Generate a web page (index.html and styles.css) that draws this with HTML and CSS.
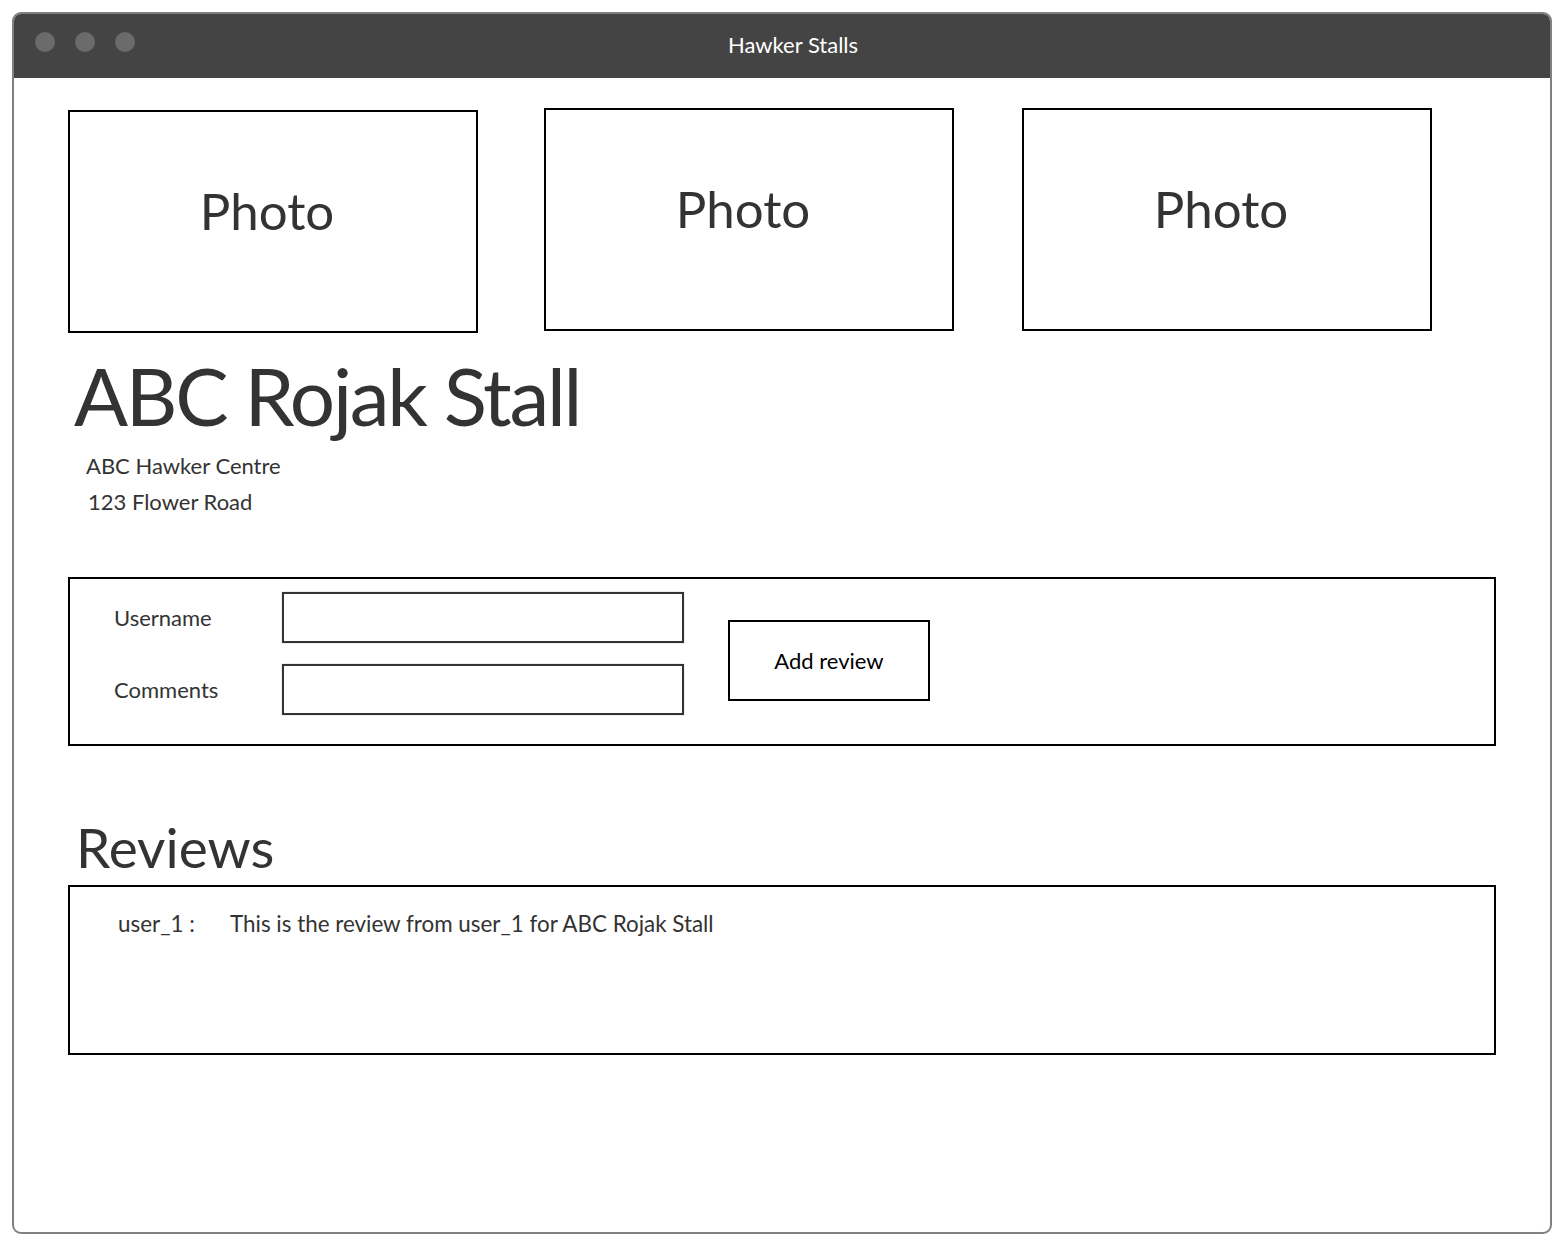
FILE: index.html
```html
<!DOCTYPE html>
<html>
<head>
<meta charset="utf-8">
<title>Hawker Stalls</title>
<link rel="stylesheet" href="styles.css">
</head>
<body>
<div class="window">
  <div class="titlebar">
    <div class="dots"><span class="dot"></span><span class="dot"></span><span class="dot"></span></div>
    <div class="title">Hawker Stalls</div>
  </div>
  <div class="content">
    <div class="photos">
      <div class="photo photo-low">Photo</div>
      <div class="photo">Photo</div>
      <div class="photo">Photo</div>
    </div>
    <h1 class="stall-name">ABC Rojak Stall</h1>
    <div class="address">
      <div class="addr-line">ABC Hawker Centre</div>
      <div class="addr-line addr-line2">123 Flower Road</div>
    </div>
    <div class="form-box">
      <div class="fields">
        <label class="label">Username</label>
        <div class="input"></div>
        <label class="label">Comments</label>
        <div class="input"></div>
      </div>
      <div class="button">Add review</div>
    </div>
    <h2 class="reviews-heading">Reviews</h2>
    <div class="reviews-box">
      <div class="review">
        <span class="review-user">user_1 :</span>
        <span class="review-text">This is the review from user_1 for ABC Rojak Stall</span>
      </div>
    </div>
  </div>
</div>
</body>
</html>
```
FILE: styles.css
```css
html, body {
  margin: 0;
  padding: 0;
  background: #ffffff;
}
body {
  font-family: Lato, "Open Sans", sans-serif;
  color: #333333;
}
.window {
  margin: 12px 0 0 12px;
  width: 1540px;
  height: 1222px;
  box-sizing: border-box;
  border: 2px solid #808080;
  border-radius: 9px;
  overflow: hidden;
  background: #ffffff;
}
.titlebar {
  height: 66px;
  margin: -2px -2px 0 -2px;
  background: #444444;
  position: relative;
  display: flex;
  align-items: center;
  justify-content: center;
}
.dots {
  position: absolute;
  left: 23px;
  top: 20px;
  display: flex;
  gap: 20px;
}
.dot {
  width: 20px;
  height: 20px;
  border-radius: 50%;
  background: #6b6b6b;
}
.title {
  color: #ffffff;
  font-size: 22px;
  margin-left: 22px;
  margin-top: -2px;
}
.content {
  padding: 32px 0 0 54px;
}
.photos {
  display: flex;
  gap: 66px;
  align-items: flex-start;
}
.photo {
  width: 410px;
  height: 223px;
  box-sizing: border-box;
  border: 2px solid #000000;
  display: flex;
  align-items: center;
  justify-content: center;
  padding: 0 12px 22px 0;
  font-size: 51px;
  color: #333333;
}
.photo + .photo {
  margin-top: -2px;
}
.photo + .photo + .photo {
  margin-left: 2px;
}
.stall-name {
  margin: 22px 0 0 6px;
  font-size: 80px;
  font-weight: 400;
  line-height: 80px;
  color: #333333;
  letter-spacing: -2.3px;
}
.address {
  margin: 13px 0 0 18px;
  font-size: 22px;
  line-height: 36px;
}
.addr-line2 {
  margin-left: 2px;
}
.form-box {
  margin-top: 57px;
  width: 1428px;
  height: 169px;
  box-sizing: border-box;
  border: 2px solid #000000;
  display: flex;
  align-items: flex-start;
  padding: 13px 0 0 44px;
}
.fields {
  display: grid;
  grid-template-columns: 168px 402px;
  row-gap: 21px;
  align-items: center;
}
.label {
  font-size: 22px;
  color: #333333;
}
.input {
  height: 51px;
  box-sizing: border-box;
  border: 2px solid #333333;
  box-shadow: 0 0 1px #999999;
}
.button {
  margin: 28px 0 0 44px;
  width: 202px;
  height: 81px;
  box-sizing: border-box;
  border: 2px solid #000000;
  display: flex;
  align-items: center;
  justify-content: center;
  font-size: 22px;
  color: #000000;
}
.reviews-heading {
  margin: 63px 0 0 8px;
  font-size: 55px;
  font-weight: 400;
  line-height: 76px;
  color: #333333;
}
.reviews-box {
  width: 1428px;
  height: 170px;
  box-sizing: border-box;
  border: 2px solid #000000;
  padding: 22px 0 0 48px;
}
.review {
  display: flex;
  font-size: 22.4px;
  line-height: 30px;
}
.review-user {
  width: 112px;
}
```
